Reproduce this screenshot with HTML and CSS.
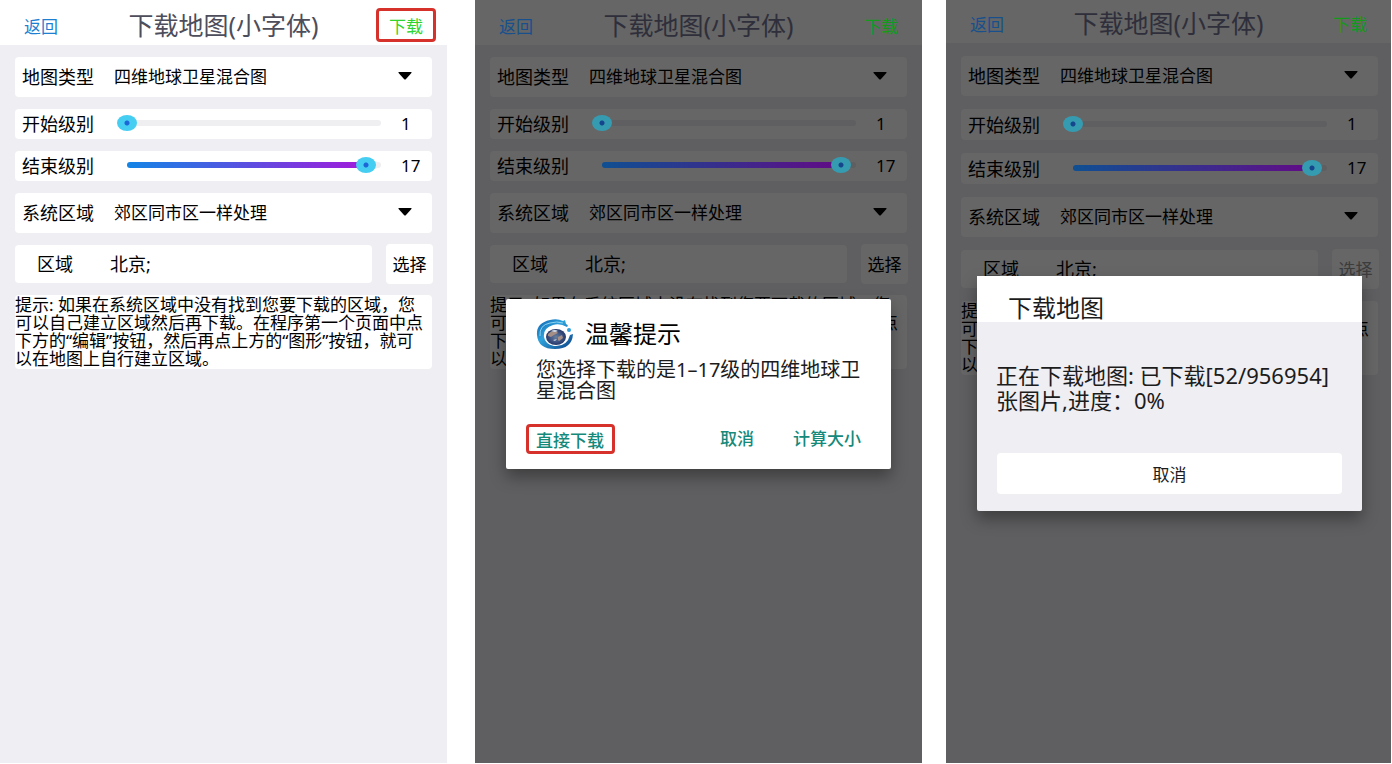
FILE: index.html
```
<!DOCTYPE html>
<html lang="zh-CN">
<head>
    <meta charset="UTF-8">
    <meta name="viewport" content="width=device-width, initial-scale=1.0">
    <title>下载地图</title>
    <link rel="stylesheet" href="styles.css">
</head>
<body>

    <!-- 设置 -->
    <section class="screen">
        <header class="header">
            <a href="#" class="back">返回</a>
            <h1>下载地图(小字体)</h1>
            <button type="button" class="download marked">下载</button>
        </header>
        <form class="form">
            <div class="row">
                <label for="type1">地图类型</label>
                <select id="type1"><option>四维地球卫星混合图</option></select>
                <svg class="arrow" viewBox="0 0 14 8"><path d="M1 0h12q1 0 .4 1L8 7q-1 1-2 0L.6 1Q0 0 1 0z"/></svg>
            </div>
            <div class="row low">
                <label for="start1">开始级别</label>
                <div class="slider"><input type="range" id="start1" min="1" max="18" value="1"></div>
                <output for="start1">1</output>
            </div>
            <div class="row low">
                <label for="end1">结束级别</label>
                <div class="slider" style="--fill: 94%"><input type="range" id="end1" min="1" max="18" value="17"></div>
                <output for="end1">17</output>
            </div>
            <div class="row">
                <label for="system1">系统区域</label>
                <select id="system1"><option>郊区同市区一样处理</option></select>
                <svg class="arrow" viewBox="0 0 14 8"><path d="M1 0h12q1 0 .4 1L8 7q-1 1-2 0L.6 1Q0 0 1 0z"/></svg>
            </div>
            <div class="area">
                <div class="row area-field">
                    <label for="area1">区域</label>
                    <input type="text" id="area1" value="北京;">
                </div>
                <button type="button" class="choose">选择</button>
            </div>
            <p class="hint">提示: 如果在系统区域中没有找到您要下载的区域，您<br>可以自己建立区域然后再下载。在程序第一个页面中点<br>下方的“编辑”按钮，然后再点上方的“图形”按钮，就可<br>以在地图上自行建立区域。</p>
        </form>
    </section>

    <!-- 温馨提示 -->
    <section class="screen dimmed">
        <header class="header">
            <a href="#" class="back">返回</a>
            <h1>下载地图(小字体)</h1>
            <button type="button" class="download">下载</button>
        </header>
        <form class="form">
            <div class="row">
                <label for="type2">地图类型</label>
                <select id="type2"><option>四维地球卫星混合图</option></select>
                <svg class="arrow" viewBox="0 0 14 8"><path d="M1 0h12q1 0 .4 1L8 7q-1 1-2 0L.6 1Q0 0 1 0z"/></svg>
            </div>
            <div class="row low">
                <label for="start2">开始级别</label>
                <div class="slider"><input type="range" id="start2" min="1" max="18" value="1"></div>
                <output for="start2">1</output>
            </div>
            <div class="row low">
                <label for="end2">结束级别</label>
                <div class="slider" style="--fill: 94%"><input type="range" id="end2" min="1" max="18" value="17"></div>
                <output for="end2">17</output>
            </div>
            <div class="row">
                <label for="system2">系统区域</label>
                <select id="system2"><option>郊区同市区一样处理</option></select>
                <svg class="arrow" viewBox="0 0 14 8"><path d="M1 0h12q1 0 .4 1L8 7q-1 1-2 0L.6 1Q0 0 1 0z"/></svg>
            </div>
            <div class="area">
                <div class="row area-field">
                    <label for="area2">区域</label>
                    <input type="text" id="area2" value="北京;">
                </div>
                <button type="button" class="choose">选择</button>
            </div>
            <p class="hint">提示: 如果在系统区域中没有找到您要下载的区域，您<br>可以自己建立区域然后再下载。在程序第一个页面中点<br>下方的“编辑”按钮，然后再点上方的“图形”按钮，就可<br>以在地图上自行建立区域。</p>
        </form>

        <div class="dialog confirm" role="dialog" aria-labelledby="confirm-title">
            <div class="confirm-title">
                <svg class="logo" viewBox="0 0 38 30">
                    <defs>
                        <linearGradient id="ring" x1="0" y1="0" x2="1" y2="1">
                            <stop offset="0" stop-color="#0d5fae"/>
                            <stop offset="0.4" stop-color="#2fa3dc"/>
                            <stop offset="1" stop-color="#0b3f86"/>
                        </linearGradient>
                        <radialGradient id="globe">
                            <stop offset="0" stop-color="#6b7f9c"/>
                            <stop offset="0.6" stop-color="#3f5483"/>
                            <stop offset="1" stop-color="#263a6b"/>
                        </radialGradient>
                    </defs>
                    <path fill="url(#ring)" d="M29 1 30 5Q33 6 31 8Q24 4 17 6Q7 9 8 18Q9 25 18 27Q31 28 34 16L37 15Q36 30 19 30Q2 30 1 16Q0 4 14 1Q21-1 27 2z"/>
                    <path fill="none" stroke="#8fd3f0" d="M4 17Q3 6 14 4Q21 2 27 4"/>
                    <ellipse cx="20" cy="18" rx="10" ry="8" fill="url(#globe)"/>
                    <path fill="#a58e86" d="M12 15q4-4 8-3l2 2-4 2-3 2-3-1zM22 18l4-2 1 3-4 3-1-1z"/>
                    <path fill="#cfdbe8" d="M15 12q4-2 7 0l-3 1zM17 21l4-1-2 2z"/>
                    <circle cx="33" cy="11" r="2" fill="#2f9fdc"/>
                </svg>
                <h2 id="confirm-title">温馨提示</h2>
            </div>
            <p>您选择下载的是1–17级的四维地球卫星混合图</p>
            <div class="actions">
                <button type="button" class="marked">直接下载</button>
                <button type="button" class="cancel">取消</button>
                <button type="button">计算大小</button>
            </div>
        </div>
    </section>

    <!-- 下载进度 -->
    <section class="screen dimmed loading">
        <header class="header">
            <a href="#" class="back">返回</a>
            <h1>下载地图(小字体)</h1>
            <button type="button" class="download">下载</button>
        </header>
        <form class="form">
            <div class="row">
                <label for="type3">地图类型</label>
                <select id="type3"><option>四维地球卫星混合图</option></select>
                <svg class="arrow" viewBox="0 0 14 8"><path d="M1 0h12q1 0 .4 1L8 7q-1 1-2 0L.6 1Q0 0 1 0z"/></svg>
            </div>
            <div class="row low">
                <label for="start3">开始级别</label>
                <div class="slider"><input type="range" id="start3" min="1" max="18" value="1"></div>
                <output for="start3">1</output>
            </div>
            <div class="row low">
                <label for="end3">结束级别</label>
                <div class="slider" style="--fill: 94%"><input type="range" id="end3" min="1" max="18" value="17"></div>
                <output for="end3">17</output>
            </div>
            <div class="row">
                <label for="system3">系统区域</label>
                <select id="system3"><option>郊区同市区一样处理</option></select>
                <svg class="arrow" viewBox="0 0 14 8"><path d="M1 0h12q1 0 .4 1L8 7q-1 1-2 0L.6 1Q0 0 1 0z"/></svg>
            </div>
            <div class="area">
                <div class="row area-field">
                    <label for="area3">区域</label>
                    <input type="text" id="area3" value="北京;">
                </div>
                <button type="button" class="choose" disabled>选择</button>
            </div>
            <p class="hint">提示: 如果在系统区域中没有找到您要下载的区域，您<br>可以自己建立区域然后再下载。在程序第一个页面中点<br>下方的“编辑”按钮，然后再点上方的“图形”按钮，就可<br>以在地图上自行建立区域。</p>
        </form>

        <div class="dialog progress" role="dialog" aria-labelledby="progress-title">
            <h2 id="progress-title">下载地图</h2>
            <p>正在下载地图: 已下载[52/956954]<br>张图片,进度：0%</p>
            <button type="button">取消</button>
        </div>
    </section>

</body>
</html>
```

FILE: styles.css
```
* {
    box-sizing: border-box;
}
body {
    margin: 0;
    padding: 0 1px 1px 0;
    min-height: 100vh;
    display: flex;
    background-color: white;
    font-family: "Noto Sans", "Noto Sans CJK SC", sans-serif;
    font-size: 17px;
    color: black;
}
h1, h2, p {
    margin: 0;
    font-weight: normal;
}
button, input, select {
    font: inherit;
    color: inherit;
    padding: 0;
    border: none;
    background: none;
}
button {
    cursor: pointer;
    white-space: nowrap;
}

.screen {
    --page: #efeef3;
    --card: #ffffff;
    --title: #4d4d5b;
    --link: #1f7fd0;
    --green: #2ed52e;
    --track: #efeff1;
    --fill-from: #1385e6;
    --fill-to: #a31adb;
    --thumb: #45cdf2;
    --dot: #1c66d8;
    --gap: 12px;
    --low: 30px;
    --head: 45px;
    flex: 447 1 0;
    min-width: 0;
    position: relative;
    background-color: var(--page);
}
.dimmed {
    --page: #5f5f61;
    --card: #666666;
    --title: #2f2f3b;
    --link: #17508c;
    --green: #149a1b;
    --track: #5f5f61;
    --fill-from: #0f4f92;
    --fill-to: #620b86;
    --thumb: #359bb0;
    --dot: #15458c;
    margin-left: 28px;
}
.loading {
    --gap: 13px;
    --low: 31px;
    --head: 43px;
    flex-grow: 445;
    margin-left: 24px;
}

.header {
    height: var(--head);
    padding: 5px 24px 0;
    display: grid;
    grid-template-columns: 1fr auto 1fr;
    align-items: center;
    background-color: var(--card);
}
.header h1 {
    font-size: 25px;
    line-height: 36px;
    color: var(--title);
    white-space: nowrap;
}
.back {
    color: var(--link);
    text-decoration: none;
}
.download {
    justify-self: end;
    width: 60px;
    height: 34px;
    margin-right: -13px;
    color: var(--green);
}
.marked {
    border: 3px solid #d6322b;
    border-radius: 4px;
}

.form {
    padding: var(--gap) 15px;
    display: flex;
    flex-direction: column;
    gap: var(--gap);
}
.row {
    height: 40px;
    padding: 0 0 2px 7px;
    display: flex;
    align-items: center;
    background-color: var(--card);
    border-radius: 4px;
}
.row label {
    flex: 0 0 92px;
    font-size: 18px;
}
.row select {
    flex: 1;
    min-width: 0;
    height: 100%;
    appearance: none;
}
.arrow {
    width: 14px;
    height: 8px;
    margin: 0 20px;
    pointer-events: none;
}
.low {
    height: var(--low);
}
.slider {
    flex: 1;
    height: 6px;
    margin: 0 20px 0 13px;
    border-radius: 3px;
    background: linear-gradient(to right, var(--fill-from), var(--fill-to)) no-repeat var(--track);
    background-size: var(--fill, 0) 100%;
}
.slider input {
    display: block;
    appearance: none;
    width: calc(100% + 20px);
    height: 16px;
    margin: -5px -10px;
}
.slider input::-webkit-slider-thumb {
    appearance: none;
    width: 20px;
    height: 16px;
    border-radius: 50%;
    background: radial-gradient(circle, var(--dot) 2px, var(--thumb) 3px);
}
.row output {
    width: 31px;
}
.area {
    display: flex;
    align-items: center;
    gap: 14px;
}
.area-field {
    flex: 1;
    min-width: 0;
    height: 38px;
    padding-left: 22px;
}
.area-field label {
    flex-basis: 73px;
}
.area-field input {
    flex: 1;
    min-width: 0;
    font-size: 18px;
}
.choose {
    flex: 0 0 47px;
    height: 40px;
    margin: -1px -1px -1px 0;
    padding-bottom: 2px;
    background-color: var(--card);
    border-radius: 4px;
}
.choose:disabled {
    color: #3c3c3c;
}
.hint {
    padding: 1px 0;
    line-height: 18px;
    white-space: nowrap;
    background-color: var(--card);
    border-radius: 4px;
}

/* 第三屏稍窄，右边距也小一点 */
.loading .form {
    padding-right: 13px;
}
.loading .header {
    padding-top: 3px;
}

.dialog {
    position: absolute;
    left: 31px;
    right: 31px;
    border-radius: 2px;
    box-shadow: 0 8px 16px rgba(0, 0, 0, 0.35);
    color: #1c1c1c;
}
.dialog h2 {
    font-size: 24px;
    line-height: 30px;
}
.confirm {
    top: 299px;
    padding: 20px 21px 15px 30px;
    background-color: white;
}
.confirm-title {
    display: flex;
    align-items: center;
    gap: 11px;
}
.confirm-title h2 {
    color: black;
}
.logo {
    width: 38px;
    height: 30px;
}
.confirm p {
    margin: 10px 0 23px;
    font-size: 20px;
    line-height: 21px;
}
.actions {
    display: flex;
    margin-left: -10px;
}
.actions button {
    height: 30px;
    padding: 0 9px 3px;
    font-weight: 500;
    color: #15897a;
}
.actions .marked {
    padding: 0 8px 3px 7px;
}
.actions .cancel {
    margin: 0 21px 0 auto;
}
.progress {
    top: 276px;
    right: 29px;
    padding-bottom: 17px;
    background-color: #efeef3;
}
.progress h2 {
    padding: 18px 31px 0;
    line-height: 28px;
    background-color: white;
}
.progress p {
    margin: 41px 19px 40px;
    font-size: 22px;
    line-height: 25px;
    white-space: nowrap;
}
.progress button {
    display: block;
    width: calc(100% - 40px);
    height: 41px;
    margin: 0 20px;
    background-color: white;
    border-radius: 4px;
}
```
